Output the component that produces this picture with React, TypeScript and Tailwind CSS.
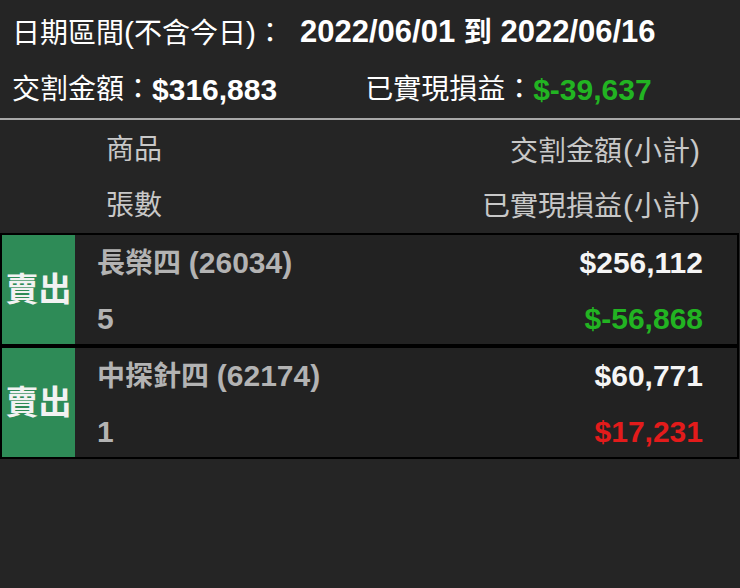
const trades = [
  { name: "長榮四", code: "26034", qty: 5, amount: "$256,112", pnl: "$-56,868", up: false },
  { name: "中探針四", code: "62174", qty: 1, amount: "$60,771", pnl: "$17,231", up: true },
];

const App = () => {
  return (
    <div className="w-[740px] h-[588px] bg-[#252525] text-[28px] font-['Liberation_Sans','Noto_Sans_CJK_TC',sans-serif] overflow-hidden">
      {/* Summary */}
      <div className="pt-[3px] px-3 text-white">
        <div className="h-[58px] flex items-center">
          <span>日期區間<span className="text-[30px]">(</span>不含今日<span className="text-[30px]">)</span>：</span>
          <span className="font-bold text-[31px] ml-[16px]">
            2022/06/01 <span className="text-[28px]">到</span> 2022/06/16
          </span>
        </div>
        <div className="h-[57px] flex items-center">
          <span>交割金額：</span>
          <span className="font-bold text-[30px]">$316,883</span>
          <span className="ml-[88px]">已實現損益：</span>
          <span className="font-bold text-[30px] text-[#22b422]">$-39,637</span>
        </div>
      </div>
      <div className="h-[2px] bg-[#a8a8a8]" />

      {/* Column headers */}
      <div className="pl-[106px] pr-[40px] text-[#c8c8c8] pt-[2px]">
        <div className="h-[56px] flex items-center justify-between">
          <span>商品</span>
          <span>交割金額<span className="text-[30px] mx-[1px]">(</span>小計<span className="text-[30px]">)</span></span>
        </div>
        <div className="h-[55px] flex items-center justify-between">
          <span>張數</span>
          <span>已實現損益<span className="text-[30px] mx-[1px]">(</span>小計<span className="text-[30px]">)</span></span>
        </div>
      </div>

      {/* Trades */}
      <div className="flex flex-col w-[739px]">
        {trades.map((t) => (
          <div key={t.code} className="flex border-2 border-black bg-[#222222] h-[113px]">
            <div className="w-[73px] shrink-0 bg-[#2e8b57] flex items-center justify-center text-[33px] font-bold text-[#f2f2f2]">
              賣出
            </div>
            <div className="flex-1 flex flex-col pl-[22px] pr-[34px] font-bold">
              <div className="h-[54px] flex items-center justify-between">
                <span className="text-[#b3b3b3]">
                  {t.name} <span className="text-[30px]">({t.code})</span>
                </span>
                <span className="text-[#f5f5f5] text-[30px]">{t.amount}</span>
              </div>
              <div className="h-[55px] pt-[3px] flex items-center justify-between">
                <span className="text-[#b3b3b3] text-[30px]">{t.qty}</span>
                <span className={`text-[30px] ${t.up ? "text-[#e31b1b]" : "text-[#22b422]"}`}>{t.pnl}</span>
              </div>
            </div>
          </div>
        ))}
      </div>
    </div>
  );
};

export default App;
